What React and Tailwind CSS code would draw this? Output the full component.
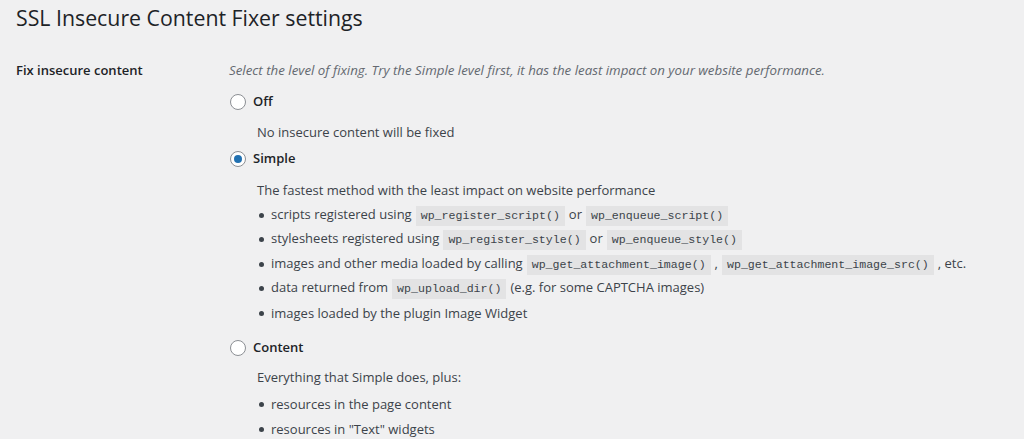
import React from 'react';

const Code = ({ children }) => (
    <code className="mx-[4px] inline-block h-[20px] bg-[#e3e3e4] px-[5px] font-['Liberation_Mono',monospace] text-[11.6px] leading-[20px] text-[#3c434a]">
        {children}
    </code>
);

const Radio = ({ checked, label }) => (
    <label className="flex h-[22px] items-center">
        <span className="flex h-[16px] w-[16px] items-center justify-center rounded-full border border-[#8c8f94] bg-white">
            {checked && <span className="h-[8px] w-[8px] rounded-full bg-[#2271b1]" />}
        </span>
        <span className="ml-[7px] font-semibold text-[#1d2327]">{label}</span>
    </label>
);

const Bullets = ({ items, className = '' }) => (
    <ul className={`ml-[29px] ${className}`}>
        {items.map((item, i) => (
            <li key={i} className="flex h-[24.5px] items-center">
                <span className="mr-[7px] h-[5px] w-[5px] rounded-full bg-[#3c434a]" />
                <span>{item}</span>
            </li>
        ))}
    </ul>
);

export default function App() {
    return (
        <div className="h-[439px] overflow-hidden bg-[#f0f0f1] px-[16px] font-['Open_Sans',sans-serif] text-[13px] text-[#3c434a]">
            <h1 className="pt-[3px] text-[21.3px] leading-[29px] font-normal text-[#1d2327]">SSL Insecure Content Fixer settings</h1>
            <div className="mt-[27px] flex">
                <div className="w-[213px] shrink-0 font-semibold leading-[22px] text-[#1d2327]">Fix insecure content</div>
                <div className="flex-1">
                    <p className="text-[13.3px] leading-[22px] italic text-[#646970]">
                        Select the level of fixing. Try the Simple level first, it has the least impact on your website performance.
                    </p>
                    <div className="mt-[10px] pl-[1px]">
                        <Radio label="Off" />
                        <p className="ml-[27px] mt-[8px] leading-[22px]">No insecure content will be fixed</p>
                        <div className="mt-[5px]">
                            <Radio checked label="Simple" />
                        </div>
                        <p className="ml-[27px] mt-[9px] leading-[22px]">The fastest method with the least impact on website performance</p>
                        <Bullets
                            className="mt-[2px]"
                            items={[
                                <>scripts registered using<Code>wp_register_script()</Code>or<Code>wp_enqueue_script()</Code></>,
                                <>stylesheets registered using<Code>wp_register_style()</Code>or<Code>wp_enqueue_style()</Code></>,
                                <>images and other media loaded by calling<Code>wp_get_attachment_image()</Code>,<Code>wp_get_attachment_image_src()</Code>, etc.</>,
                                <>data returned from<Code>wp_upload_dir()</Code>(e.g. for some CAPTCHA images)</>,
                                <>images loaded by the plugin Image Widget</>,
                            ]}
                        />
                        <div className="mt-[11px]">
                            <Radio label="Content" />
                        </div>
                        <p className="ml-[27px] mt-[7px] leading-[22px]">Everything that Simple does, plus:</p>
                        <Bullets className="mt-[5px]" items={['resources in the page content', 'resources in "Text" widgets']} />
                    </div>
                </div>
            </div>
        </div>
    );
}
